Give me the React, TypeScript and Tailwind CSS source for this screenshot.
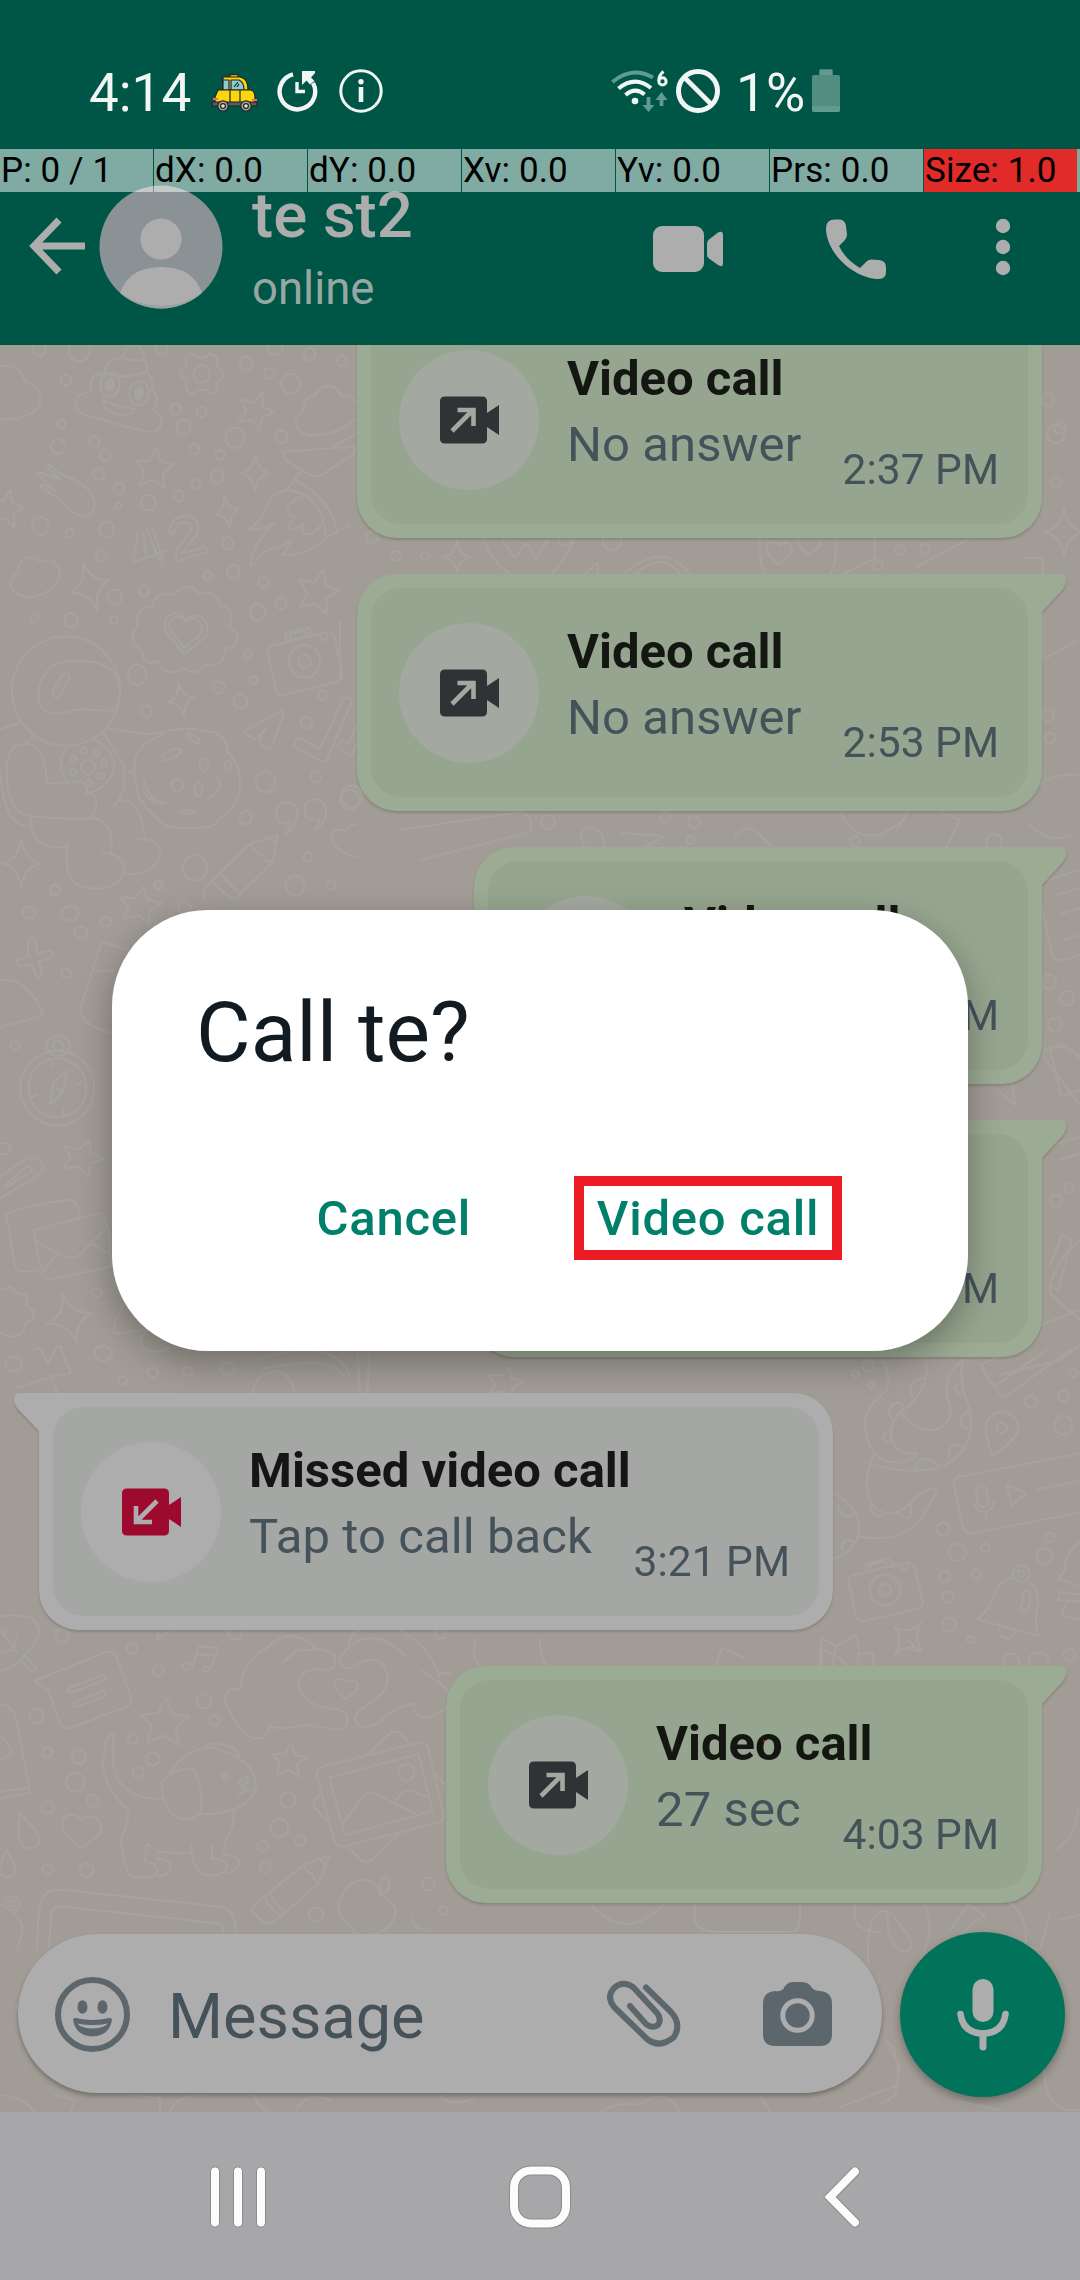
import React from "react";

type Message = {
  id: string;
  side: "in" | "out";
  title?: string;
  detail?: string;
  time: string;
  width: string;
};

const messages: Message[] = [
  { id: "m1", side: "out", title: "Video call", detail: "No answer", time: "2:37 PM", width: "w-[685px]" },
  { id: "m2", side: "out", title: "Video call", detail: "No answer", time: "2:53 PM", width: "w-[685px]" },
  { id: "m3", side: "out", title: "Video call", time: "PM", width: "w-[568px]" },
  { id: "m4", side: "out", time: "PM", width: "w-[568px]" },
  { id: "m5", side: "in", title: "Missed video call", detail: "Tap to call back", time: "3:21 PM", width: "w-[794px]" },
  { id: "m6", side: "out", title: "Video call", detail: "27 sec", time: "4:03 PM", width: "w-[596px]" },
];

const pointerCells = ["P: 0 / 1", "dX: 0.0", "dY: 0.0", "Xv: 0.0", "Yv: 0.0", "Prs: 0.0", "Size: 1.0"];

/* ---------- wallpaper ---------- */

type Dot = [number, number, number];

function Dots({ items }: { items: Dot[] }) {
  return (
    <>
      {items.map(([x, y, r], i) => (
        <circle key={i} cx={x} cy={y} r={r} />
      ))}
    </>
  );
}

const STAR = "M0 -50L16 -15L52 -12L25 14L34 50L0 32L-34 50L-26 14L-52 -10L-15 -15Z";
const SPARK = "M0 -60Q8 -8 50 0Q8 8 0 60Q-8 8 -50 0Q-8 -8 0 -60Z";
const HEART = "M0 50L-45 0C-70 -45 -15 -65 5 -32C30 -60 75 -35 55 8Z";

function Shape({ d, x, y, s = 1, r = 0 }: { d: string; x: number; y: number; s?: number; r?: number }) {
  return <path d={d} transform={`translate(${x} ${y}) rotate(${r}) scale(${s})`} />;
}

function CameraDoodle({ x, y }: { x: number; y: number }) {
  return (
    <g transform={`translate(${x} ${y}) rotate(-13)`}>
      <rect x={-102} y={-65} width={204} height={142} rx={20} />
      <path d="M-42 -65L-36 -90H32L40 -65" />
      <circle r={46} />
      <circle r={18} />
      <rect x={-28} y={-84} width={50} height={18} rx={9} />
      <circle cx={72} cy={-54} r={10} />
    </g>
  );
}

function Wallpaper() {
  return (
    <svg
      aria-hidden="true"
      className="absolute inset-0 [&_*]:[vector-effect:non-scaling-stroke]"
      width="1080"
      height="1767"
      viewBox="0 345 1080 1767"
      fill="none"
      stroke="#a6a39d"
      strokeWidth="2.2"
      strokeLinecap="round"
      strokeLinejoin="round"
    >
      <g transform="translate(0 340) scale(.3333 .3571)">
        <Dots
          items={[
            [118, 25, 19], [238, 28, 32], [198, 112, 15], [184, 235, 12], [174, 298, 21], [283, 284, 15], [316, 323, 15], [297, 375, 17],
            [357, 415, 15], [355, 465, 9], [320, 531, 22], [209, 541, 12], [121, 521, 25], [484, 24, 17], [527, 194, 16], [605, 202, 14],
            [551, 243, 21], [584, 305, 14], [661, 322, 14], [652, 383, 19], [588, 404, 13], [536, 436, 15], [445, 456, 22], [303, 604, 16],
            [345, 720, 21], [432, 702, 15], [341, 784, 11], [213, 785, 20], [103, 779, 12], [412, 937, 28], [440, 1040, 16], [657, 973, 17],
            [721, 1012, 20], [743, 881, 12], [761, 953, 11], [773, 762, 23], [843, 738, 16], [791, 678, 15], [700, 649, 19], [623, 660, 12],
            [683, 569, 17], [705, 274, 28], [843, 271, 18], [739, 65, 19], [808, 93, 15], [825, 18, 23], [872, 123, 28], [929, 40, 18],
            [1025, 58, 15], [605, 95, 24], [796, 1238, 29], [736, 1338, 19], [585, 1478, 36], [475, 1526, 13], [165, 1540, 15],
            [885, 1528, 28], [994, 1526, 13], [923, 1448, 13], [947, 1223, 15], [920, 1072, 17], [967, 995, 13], [1056, 1278, 31],
            [264, 1196, 21], [253, 1150, 9], [290, 1155, 9], [312, 1185, 9], [304, 1221, 9], [267, 1242, 9], [219, 1211, 9], [220, 1174, 9],
          ]}
        />
        <path d="M0 75Q55 60 74 115C125 130 130 170 110 195Q75 225 0 222" />
        <path d="M275 145C265 100 285 95 312 95C318 50 355 50 368 50C375 15 395 15 400 15C425 15 435 45 433 55C445 70 443 85 436 90C460 100 460 120 455 140C475 150 475 180 460 195C490 210 495 245 460 258C430 260 330 228 245 207C215 190 220 145 275 145ZM368 50Q400 60 433 55M312 95Q375 110 436 90" />
        <ellipse cx="330" cy="125" rx="29" ry="34" transform="rotate(15 330 125)" />
        <ellipse cx="330" cy="125" rx="12" ry="16" transform="rotate(15 330 125)" fill="#a6a39d" />
        <ellipse cx="417" cy="149" rx="29" ry="34" transform="rotate(15 417 149)" />
        <ellipse cx="417" cy="149" rx="12" ry="16" transform="rotate(15 417 149)" fill="#a6a39d" />
        <path d="M308 168Q355 190 404 192Q385 215 350 208Q310 198 308 168Z" />
        <path d="M575 36L590 50H615L632 36L652 50L650 73L670 90V103L650 118L650 143L634 152L615 140H592L577 152L558 138L559 115L541 100V85L559 73L559 46Z" />
        <Shape d={STAR} x={768} y={195} r={22} />
        <Shape d={STAR} x={463} y={356} s={1.1} r={6} />
        <Shape d={STAR} x={20} y={468} r={12} />
        <Shape d={STAR} x={955} y={700} s={1.2} r={15} />
        <Shape d={SPARK} x={766} y={372} s={0.85} />
        <Shape d={SPARK} x={681} y={482} s={0.75} r={-12} />
        <Shape d={SPARK} x={270} y={690} s={1.2} r={-18} />
        <Shape d={SPARK} x={544} y={1008} s={0.8} r={-10} />
        <Shape d={SPARK} x={64} y={1466} s={1.15} />
        <path d="M912 195C910 160 935 155 945 155C965 120 1010 120 1025 158C1050 150 1062 165 1070 180M912 195C870 225 885 260 930 267C1000 270 1040 240 1070 220" />
        <path d="M850 313L1060 299Q1070 305 1060 320L965 378Q945 385 925 375L860 338Q848 325 850 313ZM900 370L860 420M885 392Q990 440 1012 540M978 552L1050 520M1000 298L1070 262M860 420Q820 425 805 455Q780 520 742 530Q790 535 822 512Q750 580 753 632Q755 640 765 625Q790 585 838 580L875 560L848 602Q930 605 978 552Q970 430 860 420M905 438C860 455 845 490 888 495C850 530 865 545 910 515C900 550 930 560 965 515" />
        <path d="M148 350L185 378Q270 400 284 455Q285 495 245 492Q210 485 170 440L120 410Q118 395 170 424L110 375Q105 362 182 392L140 355" />
        <path d="M414 538L400 622L500 590M440 530L487 635M430 542L437 598M458 530L492 625M508 540Q515 490 560 492Q605 500 590 545L545 598L615 580Q630 590 615 595L530 620L528 590L575 530Q570 500 535 515Q520 550 508 540" />
        <path d="M55 655C45 625 80 590 123 622C160 600 190 640 175 670C150 710 100 730 60 715C20 700 25 660 55 655Z" />
        <path d="M455 748C465 705 500 705 520 715C545 685 580 685 598 713C635 700 655 715 660 745C695 745 705 775 685 800C725 820 720 860 675 865C675 900 650 915 610 912C600 935 570 935 550 918C520 940 480 930 475 900C440 910 425 895 427 870C390 850 390 820 413 802C405 765 425 745 455 748Z" />
        <Shape d={HEART} x={553} y={822} s={1.15} />
        <Shape d={HEART} x={553} y={818} s={0.88} />
        <CameraDoodle x={914} y={900} />
        <ellipse cx="198" cy="983" rx="162" ry="153" />
        <path d="M120 1020C100 950 150 905 200 900Q330 890 355 950Q370 1020 340 1035C310 1045 250 1025 210 1040Q140 1060 120 1020ZM160 980L185 940Q205 925 208 945L185 990Q165 1010 158 990ZM0 1090L58 1072M75 1132L100 1108M20 1210C20 1120 70 1130 90 1132Q140 1150 140 1242L240 1236Q260 1240 262 1265Q300 1280 285 1320Q270 1345 240 1342L100 1335Q20 1330 20 1210M0 1200Q10 1370 92 1360M92 1335C90 1420 150 1425 204 1420M270 1337Q345 1345 333 1438M310 1100L370 1190Q385 1270 340 1305M355 1290Q420 1280 435 1395M204 1412Q180 1540 290 1536C380 1540 410 1440 307 1436M410 1398C510 1385 510 1500 375 1496M320 1087L440 1105L485 1098" />
        <path d="M205 1135Q160 1190 205 1242M255 1268Q320 1265 343 1200Q345 1150 285 1120" />
        <path d="M410 1160C430 1120 470 1120 500 1095Q570 1080 620 1098C660 1095 685 1120 685 1155C720 1190 730 1250 710 1290Q690 1320 665 1335Q640 1370 600 1365L540 1368Q490 1365 470 1340C430 1300 415 1290 410 1250Q395 1200 410 1160ZM385 1208L410 1215M562 1100Q600 1110 600 1130Q570 1130 562 1100ZM640 1098Q680 1110 684 1155M486 1165Q520 1135 545 1150L525 1170L490 1178ZM430 1230Q450 1290 492 1297Q450 1300 430 1260M650 1225Q680 1255 625 1285M535 1322Q560 1310 586 1322Q560 1332 535 1322Z" />
        <ellipse cx="612" cy="1188" rx="14" ry="18" />
        <ellipse cx="532" cy="1246" rx="18" ry="16" />
        <ellipse cx="596" cy="1258" rx="12" ry="20" />
        <ellipse cx="683" cy="1192" rx="10" ry="13" />
        <path d="M735 1095L840 1040Q852 1036 850 1050L815 1140Q808 1150 780 1130Q775 1120 800 1085L770 1115Q755 1120 735 1100ZM882 1135L893 1113L960 1145L1030 1005Q1045 995 1056 1010L980 1178Q970 1185 960 1178L885 1140M1012 1140L1025 1120L1045 1130L1070 1080M1012 1140L1055 1165L1070 1130" />
        <path d="M858 1385Q900 1350 890 1310Q870 1285 840 1300Q820 1320 835 1345Q850 1360 872 1352Q865 1370 858 1385ZM942 1373Q985 1350 978 1310Q960 1275 925 1290Q905 1310 920 1335Q940 1350 960 1340Q955 1360 942 1373Z" />
        <path d="M615 1568Q605 1540 630 1520L750 1410L833 1387L820 1460L705 1566M750 1410Q770 1440 785 1440L800 1460L820 1460M635 1515Q670 1550 705 1566M660 1490Q690 1530 725 1550M805 1390L825 1410M1070 1355Q1040 1360 1035 1375C1000 1360 980 1390 1010 1420Q1040 1445 1070 1448" />
      </g>

      <g transform="translate(0 880) scale(.3827 .3333)">
        <Dots
          items={[
            [144, 29, 12], [76, 98, 17], [183, 100, 22], [277, 125, 14], [211, 158, 17], [173, 280, 13], [39, 497, 12], [10, 806, 17],
            [482, 82, 17], [414, 15, 11], [253, 1238, 13], [270, 1420, 23], [36, 1452, 22], [399, 1478, 15], [320, 1502, 12],
            [489, 1474, 13], [595, 1466, 18], [152, 498, 14], [152, 498, 30],
          ]}
        />
        <Shape d={STAR} x={366} y={72} s={1.05} r={10} />
        <Shape d={STAR} x={216} y={828} s={1.05} r={20} />
        <Shape d={SPARK} x={182} y={1315} s={1.25} r={-15} />
        <path d="M72 180Q80 170 92 180L98 220L132 212Q142 220 135 232L102 245L110 280Q105 295 95 288L82 252L50 258Q38 250 45 240L75 228ZM265 185L210 385Q205 430 290 460M265 185L335 210M243 272H300M0 300Q70 290 112 400Q110 412 0 440" />
        <ellipse cx="150" cy="624" rx="97" ry="112" />
        <ellipse cx="150" cy="624" rx="76" ry="88" />
        <path d="M175 572L165 635L132 675L138 610ZM138 620L160 630M138 545V560M165 688V704M82 650L98 644M203 612L216 606" />
        <path d="M0 890L70 835Q105 825 114 860Q110 880 80 900L0 955M10 920L70 860Q85 860 82 875L20 920M16 1000Q100 970 180 960Q205 960 208 1008M16 1000L40 1165Q50 1180 100 1170M90 1050L260 1000Q275 1005 285 1060L290 1160L125 1200Q110 1200 90 1070ZM90 1080Q180 1150 205 1128L275 1048M105 1185L152 1120M240 1092L290 1125" />
        <path d="M0 1230L30 1220L45 1240L70 1245L68 1275L88 1295L85 1320L65 1330L62 1355L38 1372L0 1360M88 1410Q100 1395 110 1415L125 1450L148 1400Q160 1395 160 1410L185 1480L130 1490L150 1538M45 1525L120 1495M300 1360Q290 1340 325 1270M300 1362L390 1348Q350 1380 380 1410Q410 1420 440 1405M670 1440Q760 1400 840 1415Q890 1430 912 1480Q915 1500 890 1480Q860 1440 780 1450L690 1465M660 1540Q670 1470 730 1475Q760 1490 770 1535M965 1420L960 1540M935 1420L940 1540" />
        <Shape d={STAR} x={1320} y={1505} s={0.9} r={14} />
      </g>

      <g transform="translate(0 1610) scale(.3333)">
        <Dots
          items={[
            [186, 76, 20], [395, 115, 16], [475, 182, 16], [705, 70, 20], [611, 274, 22], [644, 331, 15], [398, 386, 14], [458, 446, 20],
            [415, 488, 16], [109, 318, 21], [143, 427, 15], [237, 440, 21], [226, 517, 28], [277, 573, 18], [143, 593, 18], [143, 778, 15],
            [259, 780, 21], [38, 880, 21], [38, 880, 9], [863, 571, 23], [838, 653, 27], [902, 691, 16], [789, 709, 16], [796, 772, 16],
            [948, 914, 21], [1285, 822, 19], [1330, 902, 12], [1219, 487, 25], [676, 499, 8], [1321, 70, 16], [73, 1190, 22],
          ]}
        />
        <Shape d={STAR} x={494} y={332} s={1.4} r={4} />
        <Shape d={STAR} x={868} y={448} r={6} />
        <Shape d={HEART} x={240} y={665} s={1.05} />
        <Shape d={HEART} x={1036} y={237} s={0.62} />
        <path d="M0 20Q60 10 95 25C135 60 120 90 72 135L62 150Q30 180 0 183M0 60L52 128M18 58V85M50 82L42 115M0 128L40 120M62 150L92 180Q105 185 108 172L72 135" />
        <path d="M103 212L320 126Q340 120 350 142L395 265Q395 280 380 290L215 352Q190 365 180 340L145 242ZM205 235L305 196Q325 195 315 210L215 248Q195 248 205 235ZM220 280L310 242Q325 245 312 260L230 290Q213 292 220 280Z" />
        <path d="M577 170L597 110L655 113L630 180M590 133L648 135M577 165Q550 150 545 170Q560 190 577 170M630 175Q610 165 609 182Q620 192 630 175M475 68L472 90L510 60" />
        <path d="M720 238C680 230 670 260 678 285Q720 370 750 380Q800 400 810 345M810 350Q850 360 920 345L1020 360Q1050 350 1040 315Q1020 295 990 295C920 290 880 230 903 200Q920 170 985 180Q1010 175 1005 140Q990 115 940 118L890 122L848 157M720 238Q730 150 800 115Q870 40 950 115M1215 137Q1150 70 1080 90Q1010 130 1022 165Q1040 180 1060 170Q1120 130 1150 165Q1185 220 1130 265L1080 300Q1055 325 1075 345Q1100 360 1140 335Q1190 285 1250 280M1045 105Q1050 70 1080 60M1200 60Q1290 110 1318 200M1240 285Q1250 350 1320 305L1350 290M1315 200Q1320 185 1350 190" />
        <path d="M340 372Q315 370 310 450Q305 530 385 600Q390 620 365 680Q360 720 385 790Q395 805 445 803C485 800 480 755 434 755L440 702L475 722Q500 730 573 728M340 372V460Q355 570 490 567M573 700Q575 800 635 797C700 790 690 740 636 748V705M680 788C730 785 730 730 672 735Q665 710 690 670Q705 635 700 598M475 722L472 748C525 745 525 795 475 798M510 490Q550 415 640 413Q770 450 768 530Q765 565 710 595Q650 615 600 613M615 410Q640 390 700 415Q720 430 715 445M485 520Q520 475 570 475Q605 490 605 590Q600 630 550 628Q500 620 485 540ZM715 515Q740 495 745 505L733 530Q718 525 715 515M733 530L735 545L715 555M735 540L750 545" />
        <path d="M60 610Q120 670 118 690Q115 715 90 715Q60 715 55 670ZM20 720Q0 750 0 790Q10 805 30 802Q50 790 46 765ZM0 280Q40 290 50 330L90 548L0 566M0 375Q40 410 30 435Q15 450 0 445M0 545L85 535" />
        <path d="M110 1020Q115 920 120 880Q130 840 175 838L660 890Q710 900 708 970M145 1020L155 905Q160 888 190 890L655 940Q670 945 672 970M0 885H18M38 905C80 950 70 960 50 1020" />
        <path d="M757 890L910 765L990 737L955 820L830 930Q810 945 795 938Q750 910 757 890ZM795 860Q810 900 840 918M812 850Q820 880 855 905M910 765Q920 790 935 788L945 810L955 820M960 748L978 768" />
        <path d="M1140 855Q1180 870 1188 900Q1180 970 1100 975Q1060 980 1050 945Q1010 920 1018 880Q1040 810 1090 808Q1140 815 1140 855ZM1145 850Q1130 810 1160 800Q1175 820 1160 845ZM1238 925Q1240 960 1290 962" />
        <path d="M950 490Q950 475 970 470L1260 397Q1280 395 1285 415L1330 610Q1335 630 1315 638L1030 710Q1010 712 1003 695ZM988 502L1255 433L1298 603L1035 675ZM1028 640L1090 558Q1110 540 1130 555L1245 610M1185 575L1205 550Q1220 540 1235 543L1285 563M1102 433L1170 370Q1190 360 1205 375L1228 400M1042 712L1085 752Q1100 762 1115 750L1200 670M960 555Q935 570 942 590L988 640M1310 495L1335 525" />
      </g>

      <g transform="translate(820 1350) scale(.3333)">
        <Dots
          items={[
            [144, 47, 17], [106, 72, 10], [154, 104, 9], [632, 156, 18], [730, 138, 16], [730, 225, 28], [760, 69, 12], [545, 234, 16],
            [370, 537, 19], [413, 607, 26], [497, 593, 13], [373, 679, 16], [469, 673, 14], [384, 741, 17], [387, 823, 21],
            [451, 869, 10], [690, 563, 14], [674, 618, 24], [604, 671, 25], [604, 671, 9], [748, 915, 18], [574, 935, 24], [655, 937, 30],
          ]}
        />
        <Shape d={SPARK} x={265} y={866} s={1.05} r={40} />
        <CameraDoodle x={195} y={720} />
        <path d="M190 30Q215 90 200 120C140 170 130 200 137 240Q150 340 240 338Q290 330 287 308Q230 320 213 260Q210 215 245 185Q340 110 315 25M245 190Q290 250 350 238Q400 215 390 170C370 110 375 70 430 28Q415 80 440 150Q470 230 435 290Q370 400 148 342M160 315Q120 410 160 470Q220 520 280 450Q310 415 345 415Q355 420 340 445L300 510Q240 580 118 560M40 430Q120 470 118 540Q110 600 40 628M310 85Q270 90 270 125Q275 145 287 145M245 190Q255 160 232 157Q205 165 208 190Q212 208 220 210M213 243Q185 245 190 268Q200 280 215 275M285 365Q290 325 320 327Q355 335 357 360M388 325Q380 285 410 285Q430 285 432 293M452 240Q420 235 422 210Q430 185 448 188M428 135Q400 130 405 110Q415 98 425 100M152 465Q155 500 180 500L200 490M235 490Q250 510 270 500Q275 490 272 465M55 465Q60 495 85 500L102 495M68 600Q60 580 80 570L100 575" />
        <path d="M485 45Q500 30 590 0M485 45Q490 70 545 138Q555 142 570 130L750 0M525 108L680 0M515 318L498 250Q490 195 545 185Q600 195 595 240Q580 280 515 318ZM780 310L420 380Q398 385 402 405L428 530Q435 550 455 550L780 488M560 405L618 430L575 466ZM650 418L780 393" />
        <rect x="470" y="408" width="34" height="64" rx="17" transform="rotate(-8 487 440)" />
        <path d="M462 465Q475 490 497 486Q520 480 520 455M497 486L500 512M582 683Q540 690 525 730Q510 780 470 808L655 857Q640 810 655 760Q655 710 620 690M535 835Q540 865 562 865Q580 862 583 848M610 725Q630 715 632 745Q625 785 612 785Q595 785 607 760Q610 745 610 725ZM780 575Q735 610 735 660L712 690Q740 690 780 710M780 735L722 725L712 750L780 755M740 758Q720 790 735 800L780 810M5 865L35 880Q50 890 50 888L105 855Q125 890 110 948M50 888Q35 920 40 948M5 865V948M115 910H160V948" />
        <path d="M780 -330Q690 -250 690 -170L780 -90M780 -780L725 -760L690 -900L720 -920L780 -880M715 -620L780 -640M718 -570L780 -590" />
      </g>

      <g>
        <Dots
          items={[
            [1060, 428, 6], [1056, 482, 5], [1048, 400, 6], [1056, 434, 9], [396, 556, 5], [425, 556, 4], [372, 537, 6], [565, 540, 6], [612, 541, 9],
            [900, 550, 5], [925, 549, 5], [878, 565, 5], [694, 822, 6], [665, 817, 5], [548, 822, 7], [350, 800, 10], [1048, 715, 6], [1050, 738, 5],
            [691, 840, 4], [855, 841, 5], [994, 842, 8], [1049, 982, 7], [1067, 998, 7], [1055, 1025, 7], [1069, 1188, 5], [1056, 1201, 6],
          ]}
        />
        <Shape d={SPARK} x={457} y={557} s={0.27} />
        <Shape d={SPARK} x={1064} y={532} s={0.4} />
        <Shape d={HEART} x={778} y={553} s={0.23} />
        <Shape d={HEART} x={808} y={545} s={0.2} />
        <path d="M483 538Q490 560 510 574M575 538Q565 560 552 574M503 541L515 558L526 543L536 558L548 540M760 538Q758 560 765 574M835 538Q838 560 830 574M625 573Q663 540 690 574M635 574Q663 550 680 574M875 538V558L843 574M915 568L970 538M1043 560V660L1078 640M1025 558H1043M585 574L598 562V574M340 620V680M400 830L520 812Q535 815 530 832L420 860M580 835Q590 820 602 835Q610 860 585 848ZM622 833L665 836L640 850M735 838Q745 820 760 835L775 850M840 810Q850 840 880 835L905 820M897 830L915 800M940 812L960 820L945 850M980 805L1000 812M1030 825Q1050 845 1070 835M1020 800Q1050 770 1079 775" />
        <path d="M1046 880L1080 870M1056 895L1080 888M1060 914L1080 908M1064 940L1080 935M1040 900L1052 955Q1058 965 1078 955M1043 1056L1080 1105M1045 1050Q1065 1040 1080 1058M998 1090L1015 1105L1012 1080M1050 1265L1062 1235L1072 1240L1058 1290L1046 1285M1040 1325L1080 1310M1000 1375L1060 1360L1080 1345" />
        <path d="M855 1903V1920Q860 1932 880 1932M590 1903Q625 1945 665 1903M695 1903V1922Q700 1932 720 1932H790Q800 1932 800 1915V1903M870 1990Q865 1940 872 1920Q885 1900 900 1925Q920 1950 905 1952Q885 1945 888 1915M925 1903Q935 1935 920 1960M945 1960Q960 1930 985 1915L968 1905L950 1930M1010 1903Q1030 1920 1025 1945L1040 1950L1050 1912M1060 1920L1080 1915M885 2045L900 2065L895 2095L880 2105M885 2040Q900 2050 898 2085L840 2107M1045 2060Q1040 2115 1080 2110M955 2100L1000 2110M0 2095Q25 2098 35 2112M55 2095L75 2100L70 2112M130 2095L160 2098V2112M170 2112Q175 2095 205 2095M255 2095Q255 2105 270 2112M295 2112Q305 2090 330 2100M440 2095Q450 2108 475 2098M600 2112Q620 2100 640 2105Q665 2085 680 2112M760 2095L770 2112M1055 1850Q1075 1840 1078 1810" />
        <path d="M420 1670L440 1683L455 1700M475 1640Q470 1665 490 1672M540 1640Q540 1670 560 1672M715 1668L722 1648L745 1658M900 1648L920 1652L908 1640M820 1670V1648L835 1655L850 1668" />
      </g>
    </svg>
  );
}

/* ---------- icons ---------- */

function TaxiIcon() {
  return (
    <svg width="48" height="40" viewBox="0 0 48 40" stroke="#232323" strokeWidth="1.2" strokeLinejoin="round">
      <path d="M19 4V1.5H27V4" fill="#f0a018" />
      <path d="M12 17V4H29Q37 5 37 17Z" fill="#fbd50e" />
      <path d="M12 17V7H18V17Z" fill="#8ccbd6" />
      <path d="M20 17V7H28Q33 9 33 17Z" fill="#8ccbd6" />
      <path d="M4 31V24L7 17H40Q44 18 44 25V31Z" fill="#fbd50e" />
      <path d="M1 29H46V33H1Z" fill="#5b5b60" />
      <path d="M29 17V29M19 17V29M23 14L27 9M26 14L28 11" fill="none" />
      <path d="M2 26H7M41 27H46" stroke="#ef6b62" strokeWidth="2" />
      <circle cx="12" cy="33" r="5.2" fill="#a3a3a3" />
      <circle cx="12" cy="33" r="2.4" fill="#ece2b5" />
      <circle cx="35" cy="33" r="5.2" fill="#a3a3a3" />
      <circle cx="35" cy="33" r="2.4" fill="#ece2b5" />
    </svg>
  );
}

function ClockArrowIcon() {
  return (
    <svg width="42" height="42" viewBox="0 0 42 42" fill="none" stroke="#f1f5f4">
      <path d="M16 4.3A17.8 17.8 0 1 0 36 13" strokeWidth="4.400" />
      <path d="M25 1H38V3L34 7.500L37.500 11L33 14.500L29.500 10.500L25 15Z" fill="#f1f5f4" stroke="none" />
      <path d="M20 12V21.500H28" strokeWidth="3.400" />
    </svg>
  );
}

function InfoIcon() {
  return (
    <svg width="44" height="44" viewBox="0 0 44 44" fill="none" stroke="#f1f5f4">
      <circle cx="22" cy="22" r="20.200" strokeWidth="3" />
      <circle cx="22" cy="12.800" r="2.700" fill="#f1f5f4" stroke="none" />
      <path d="M22 18V33" strokeWidth="4.600" />
    </svg>
  );
}

function WifiIcon() {
  return (
    <svg width="58" height="46" viewBox="0 0 58 46" fill="none">
      <path d="M1.500 13Q21 -3.500 42 8.500" stroke="#619a8f" strokeWidth="4" />
      <path d="M7.500 19.500Q24 6 40 19" stroke="#f1f5f4" strokeWidth="4" />
      <path d="M14.500 26Q24 17.500 33.500 25.500" stroke="#f1f5f4" strokeWidth="4" />
      <circle cx="24" cy="32" r="3.300" fill="#f1f5f4" />
      <path d="M52.500 2.500Q47.800 6 47.800 12" stroke="#f1f5f4" strokeWidth="3" />
      <circle cx="51.500" cy="12.400" r="3.600" stroke="#f1f5f4" strokeWidth="3" />
      <path d="M37.500 28V40M50.500 37V28" stroke="#619a8f" strokeWidth="3.800" />
      <path d="M31.500 36H43.500L37.500 43ZM44.500 31H56.500L50.500 23Z" fill="#619a8f" />
    </svg>
  );
}

function BlockedIcon() {
  return (
    <svg width="44" height="44" viewBox="0 0 44 44" fill="none" stroke="#f1f5f4">
      <circle cx="22" cy="22" r="19.500" strokeWidth="5" />
      <path d="M8.500 8.500L35.500 35.500" strokeWidth="4.600" />
    </svg>
  );
}

function BatteryIcon() {
  return (
    <svg width="28" height="44" viewBox="0 0 28 44">
      <path d="M7.500 1.500Q7.500 .500 8.500 .500H19.500Q20.500 .500 20.500 1.500V6H26Q28 6 28 8V41Q28 43 26 43H2Q0 43 0 41V8Q0 6 2 6H7.500Z" fill="#538c80" />
      <path d="M0 37H28V41Q28 43 26 43H2Q0 43 0 41Z" fill="#619a8f" />
      <path d="M7.500 6V1.500Q7.500 .500 8.500 .500H19.500Q20.500 .500 20.500 1.500V6Z" fill="#619a8f" />
    </svg>
  );
}

function BackArrowIcon() {
  return (
    <svg width="56" height="58" viewBox="0 0 56 58" fill="none" stroke="#adadad" strokeWidth="7">
      <path d="M30 3L5 29L30 55M6 29H56" />
    </svg>
  );
}

function Avatar() {
  return (
    <svg width="124" height="124" viewBox="0 0 124 124">
      <defs>
        <clipPath id="avatar-clip">
          <circle cx="62" cy="62" r="61.500" />
        </clipPath>
      </defs>
      <g clipPath="url(#avatar-clip)">
        <rect width="124" height="124" fill="#8a9295" />
        <circle cx="62" cy="54" r="20.600" fill="#adadad" />
        <path d="M21 108Q30 82 62 82Q94 82 103 108Q86 121 62 121Q38 121 21 108Z" fill="#adadad" />
        <path d="M21 107Q38 121 62 121Q86 121 103 107V124H21Z" fill="#9c9fa3" />
      </g>
    </svg>
  );
}

function VideoIcon() {
  return (
    <svg width="72" height="48" viewBox="0 0 72 48" fill="#adadad">
      <rect x="0" y="1" width="51" height="46" rx="9" />
      <path d="M54 18.500Q54 16 56 14.500L65 7.500Q70 5 70 10V38Q70 43 65 40L56 33.500Q54 32 54 29.500Z" />
    </svg>
  );
}

function PhoneIcon() {
  return (
    <svg width="61" height="61" viewBox="0 0 61 61" fill="#adadad">
      <path d="M9 .500H14Q19 1 20 7L21 16Q21 19 18 22L13 27Q19 40 34 49L40 43Q42 40.500 45 40.500L53 41Q60 42 60 48V53Q60 60 53 60C28 60 0 34 0 9Q0 .500 9 .500Z" />
    </svg>
  );
}

function MenuDotsIcon() {
  return (
    <svg width="16" height="58" viewBox="0 0 16 58" fill="#adadad">
      <circle cx="8" cy="8" r="7.200" />
      <circle cx="8" cy="29" r="7.200" />
      <circle cx="8" cy="50" r="7.200" />
    </svg>
  );
}

function CallIcon({ incoming }: { incoming: boolean }) {
  return incoming ? (
    <svg width="60" height="48" viewBox="0 0 60 48">
      <path d="M5 .500H42Q47 .500 47 5.500V17L59 9V39L47 31V42.500Q47 47.500 42 47.500H5Q0 47.500 0 42.500V5.500Q0 .500 5 .500Z" fill="#9e0a2e" />
      <path d="M35 13L14 34M14 18V34H30" fill="none" stroke="#adadad" strokeWidth="4.600" />
    </svg>
  ) : (
    <svg width="60" height="48" viewBox="0 0 60 48">
      <path d="M5 .500H42Q47 .500 47 5.500V17L59 9V39L47 31V42.500Q47 47.500 42 47.500H5Q0 47.500 0 42.500V5.500Q0 .500 5 .500Z" fill="#303236" />
      <path d="M12 35L33 14M17.500 14H33.500V30" fill="none" stroke="#a3a8a1" strokeWidth="4.600" />
    </svg>
  );
}

function SmileIcon() {
  return (
    <svg width="75" height="75" viewBox="0 0 75 75" fill="#5c676d">
      <circle cx="37.500" cy="37.500" r="34.500" fill="none" stroke="#5c676d" strokeWidth="6" />
      <ellipse cx="27.500" cy="30" rx="5" ry="6.700" />
      <ellipse cx="47.500" cy="30" rx="5" ry="6.700" />
      <path d="M18 43Q18 40.500 21 41Q37.500 45 54 41Q57 40.500 57 43Q54 59 37.500 59.500Q21 59 18 43Z" />
      <path d="M22 46.500Q37.500 49.500 53 46.500Q48 51.500 37.500 51.500Q27 51.500 22 46.500Z" fill="#adadad" />
    </svg>
  );
}

function ClipIcon() {
  return (
    <svg width="74" height="68" viewBox="0 0 74 68" fill="none" stroke="#5c676d" strokeWidth="6" strokeLinecap="round" strokeLinejoin="round">
      <path d="M39 7.500L64 32Q75 44 67 57Q53 69 40 59L7 27Q-1 17 7 8Q16 0 26 7L50 33Q55 39 51 45Q45 49 39 44L23 26" />
    </svg>
  );
}

function CameraIcon() {
  return (
    <svg width="70" height="66" viewBox="0 0 70 66">
      <path d="M20 9Q23 1 30 1H39Q46 1 49 7Q52 10 57 10Q69 11 69 23V53Q69 65 57 65H12Q0 65 0 53V23Q0 11 12 10Q17 11 20 8Z" fill="#5c676d" />
      <circle cx="34.500" cy="34.500" r="14.700" fill="none" stroke="#adadad" strokeWidth="5" />
    </svg>
  );
}

function MicIcon() {
  return (
    <svg width="54" height="74" viewBox="0 0 54 74" fill="none" stroke="#adadad">
      <rect x="16.500" y="1" width="21" height="43" rx="10.500" fill="#adadad" stroke="none" />
      <path d="M4.500 36Q7 55 27 55.500Q47 55 49.500 36" strokeWidth="6.600" strokeLinecap="round" />
      <path d="M27 56V69" strokeWidth="7" strokeLinecap="round" />
    </svg>
  );
}

/* ---------- sections ---------- */

function StatusBar() {
  return (
    <div className="flex h-[149px] items-start pt-[69px]">
      <div className="ml-[89px] -mt-[7px] text-[53px] leading-[62px] text-[#f1f5f4]">4:14</div>
      <div className="ml-[20px] mt-[4px]">
        <TaxiIcon />
      </div>
      <div className="ml-[18px] mt-px">
        <ClockArrowIcon />
      </div>
      <div className="ml-[20px]">
        <InfoIcon />
      </div>
      <div className="ml-auto flex items-start">
        <WifiIcon />
        <div className="ml-[7px]">
          <BlockedIcon />
        </div>
        <div className="ml-[16px] -mt-[7px] w-[68px] whitespace-nowrap text-[53.5px] leading-[62px] text-[#f1f5f4]">1%</div>
        <div className="ml-[8px] mr-[240px]">
          <BatteryIcon />
        </div>
      </div>
    </div>
  );
}

function PointerBar() {
  return (
    <div className="absolute left-0 top-[149px] flex h-[43px] w-full gap-px overflow-hidden text-[35px] leading-[43px] text-black">
      {pointerCells.map((label, i) => (
        <div
          key={label}
          className={
            i === pointerCells.length - 1
              ? "w-[153px] shrink-0 whitespace-nowrap bg-[#e12b29] pl-px tracking-[0.1px]"
              : "w-[153px] shrink-0 whitespace-nowrap bg-white/50 pl-px tracking-[0.1px]"
          }
        >
          {label}
        </div>
      ))}
      <div className="-ml-px grow bg-white/50" />
    </div>
  );
}

function Header() {
  return (
    <header className="relative h-[345px] shrink-0 bg-[#005646]">
      <StatusBar />
      <div className="flex items-start">
        <div className="ml-[29px] mt-[68px]">
          <BackArrowIcon />
        </div>
        <div className="ml-[14px] mt-[36px]">
          <Avatar />
        </div>
        <div className="ml-[29px] mt-[30px] flex flex-col">
          <div className="text-[63.5px] font-medium leading-[74px] text-[#adadad]">te st2</div>
          <div className="mt-[9px] text-[45.5px] leading-[54px] text-[#96a7a4]">online</div>
        </div>
        <div className="ml-auto mr-[69px] flex">
          <div className="mt-[76px]">
            <VideoIcon />
          </div>
          <div className="ml-[101px] mt-[70px]">
            <PhoneIcon />
          </div>
          <div className="ml-[108px] mt-[69px]">
            <MenuDotsIcon />
          </div>
        </div>
      </div>
      <PointerBar />
    </header>
  );
}

function Bubble({ m }: { m: Message }) {
  const incoming = m.side === "in";
  return (
    <div className={incoming ? "flex justify-start pl-[39px]" : "flex justify-end pr-[38px]"}>
      <div
        className={`relative h-[237px] shrink-0 px-[14px] pt-[14px] pb-[14px] drop-shadow-[0_2px_1px_rgba(60,50,50,0.22)] ${m.width} ${
          incoming ? "rounded-[40px] rounded-tl-none bg-[#adadad]" : "rounded-[40px] rounded-tr-none bg-[#9cab94]"
        }`}
      >
        {incoming ? (
          <svg className="absolute -left-[25px] top-0" width="26" height="40" viewBox="0 0 26 40">
            <path d="M26 0H5Q-1 1 0 9L3 15L26 39Z" fill="#adadad" />
          </svg>
        ) : (
          <svg className="absolute -right-[25px] top-0" width="26" height="40" viewBox="0 0 26 40">
            <path d="M0 0H21Q27 2 25 9L22 15L0 39Z" fill="#9cab94" />
          </svg>
        )}
        <div className={`flex h-[209px] rounded-[30px] pl-[28px] pr-[29px] pt-[35px] ${incoming ? "bg-[#a5a7a5]" : "bg-[#96a58f]"}`}>
          <div className={`flex size-[140px] shrink-0 items-center justify-center rounded-full pl-px ${incoming ? "bg-[#adadad]" : "bg-[#a3a8a1]"}`}>
            <CallIcon incoming={incoming} />
          </div>
          <div className="ml-[28px] flex w-0 grow flex-col whitespace-nowrap">
            {m.title && <div className={`text-[49px] font-bold leading-[57px] ${incoming ? "text-[#151515]" : "text-[#141612]"}`}>{m.title}</div>}
            {m.detail && <div className="mt-[9px] text-[49px] leading-[57px] tracking-[0.1px] text-[#45525a]">{m.detail}</div>}
          </div>
          <div className="mt-[95px] shrink-0 whitespace-nowrap text-[42.5px] leading-[49px] text-[#45525a]">{m.time}</div>
        </div>
      </div>
    </div>
  );
}

function Composer() {
  return (
    <div className="flex items-start pl-[18px] pr-[15px]">
      <div className="mt-[2px] flex h-[159px] w-[864px] items-center rounded-full bg-[#adadad] pl-[37px] pr-[49px] shadow-[0_3px_4px_rgba(0,0,0,0.28)]">
        <div className="mt-[2px]">
          <SmileIcon />
        </div>
        <div className="ml-[38px] mt-[6px] text-[63px] leading-[74px] text-[#45525a]">Message</div>
        <div className="ml-auto">
          <ClipIcon />
        </div>
        <div className="ml-[82px]">
          <CameraIcon />
        </div>
      </div>
      <div className="ml-auto flex size-[165px] items-center justify-center rounded-full bg-[#00735a] shadow-[0_4px_8px_rgba(0,0,0,0.3)]">
        <MicIcon />
      </div>
    </div>
  );
}

function NavBar() {
  return (
    <nav className="flex h-[168px] shrink-0 items-center bg-[#a7a7a9] pt-[2px]">
      <svg className="ml-[209px]" width="58" height="64" viewBox="0 0 58 64" fill="#fcfcfc" stroke="#8b8b8b" strokeWidth="1">
        <rect x="1.500" y="2" width="9" height="60" rx="4" />
        <rect x="24.500" y="2" width="9" height="60" rx="4" />
        <rect x="47.500" y="2" width="9" height="60" rx="4" />
      </svg>
      <svg className="ml-[241px]" width="64" height="66" viewBox="0 0 64 66" fill="none">
        <rect x="6" y="6.500" width="52" height="53" rx="17" stroke="#8b8b8b" strokeWidth="10" />
        <rect x="6" y="6.500" width="52" height="53" rx="17" stroke="#fcfcfc" strokeWidth="8" />
      </svg>
      <svg className="ml-[250px]" width="40" height="64" viewBox="0 0 40 64" fill="none" strokeLinecap="round">
        <path d="M33 6.500L8 32L33 57.500" stroke="#8b8b8b" strokeWidth="10" />
        <path d="M33 6.500L8 32L33 57.500" stroke="#fcfcfc" strokeWidth="8" />
      </svg>
    </nav>
  );
}

function CallDialog() {
  return (
    <div
      role="dialog"
      className="absolute left-[112px] top-[910px] flex h-[441px] w-[856px] flex-col rounded-[96px] bg-white shadow-[0_12px_34px_rgba(0,0,0,0.3)]"
    >
      <h2 className="ml-[84px] mt-[74px] text-[84px] leading-[98px] text-[#121b22]">Call te?</h2>
      <div className="mt-[94px] flex items-center justify-end pr-[126px] text-[49px] font-medium leading-[57px] tracking-[0.75px] text-[#00806a]">
        <button className="mr-[103px]">Cancel</button>
        <button className="flex h-[84px] w-[268px] items-center justify-center whitespace-nowrap border-[10px] border-[#ed1c24]">Video call</button>
      </div>
    </div>
  );
}

export default function App() {
  return (
    <div className="relative flex h-[2280px] w-[1080px] flex-col overflow-hidden bg-[#a19c95] font-['Roboto',sans-serif]">
      <Header />
      <main className="relative flex h-[1767px] shrink-0 flex-col overflow-hidden bg-[#a19c95]">
        <Wallpaper />
        <div className="relative flex h-[1558px] shrink-0 flex-col justify-end gap-[36px]">
          {messages.map((m) => (
            <Bubble key={m.id} m={m} />
          ))}
        </div>
        <div className="relative mt-[29px]">
          <Composer />
        </div>
        <div className="absolute left-[763px] top-[1395px] size-[2px] bg-red-600" />
      </main>
      <NavBar />
      <CallDialog />
    </div>
  );
}
